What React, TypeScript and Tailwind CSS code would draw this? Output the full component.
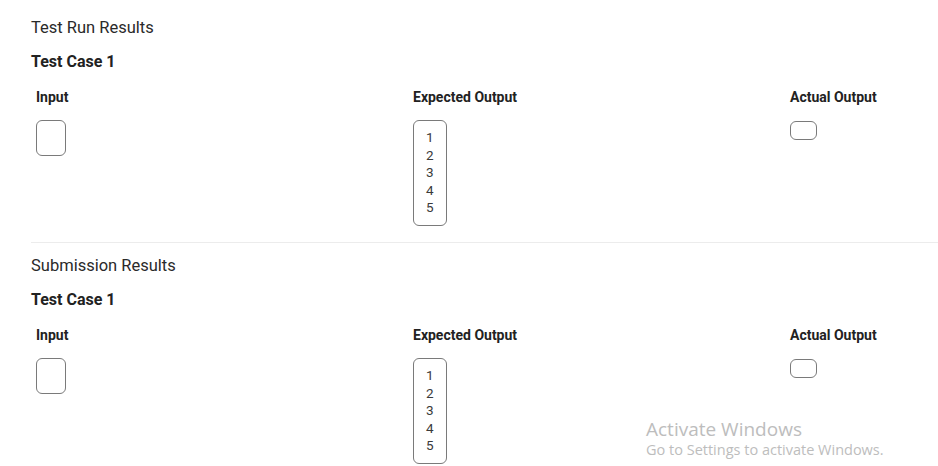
import React from 'react';

const sections = ['Test Run Results', 'Submission Results'];

function Box({ children, className = '' }: { children?: React.ReactNode; className?: string }) {
    return (
        <pre
            className={
                'inline-block border border-[#7a7a7a] rounded-[6px] px-3 py-2 text-[13.5px] leading-[17.6px] text-[#3a3a3a] ' +
                className
            }
            style={{ fontFamily: 'Roboto, "Liberation Sans", sans-serif' }}
        >
            {children}
        </pre>
    );
}

function ResultBlock({ label }: { label: string }) {
    return (
        <div>
            <div className="text-[16.5px] leading-[20px] text-[#2a2a2a]">{label}</div>
            <div className="mt-[14px] text-[16px] leading-[20px] font-bold text-[#222]">Test Case 1</div>
            <div className="ml-[5px] mt-[15px] grid grid-cols-[377px_377px_1fr]">
                <div>
                    <div className="text-[14px] leading-[20px] font-bold text-[#222]">Input</div>
                    <Box className="mt-[13px] w-[30px] h-[36px]" />
                </div>
                <div>
                    <div className="text-[14px] leading-[20px] font-bold text-[#222]">Expected Output</div>
                    <Box className="mt-[13px] w-[34px]">{'1\n2\n3\n4\n5'}</Box>
                </div>
                <div>
                    <div className="text-[14px] leading-[20px] font-bold text-[#222]">Actual Output</div>
                    <Box className="mt-[14px] w-[27px] h-[19px]" />
                </div>
            </div>
        </div>
    );
}

export default function App() {
    return (
        <div
            className="relative w-[938px] h-[466px] overflow-hidden bg-white pl-[31px] pt-[18px]"
            style={{ fontFamily: 'Roboto, "Liberation Sans", sans-serif' }}
        >
            <ResultBlock label={sections[0]} />
            <div className="mt-[16px] h-px bg-[#ececec]" />
            <div className="mt-[13px]">
                <ResultBlock label={sections[1]} />
            </div>

            {/* windows watermark */}
            <div
                className="absolute left-[646px] top-[416px] text-[#bdbdbd] pointer-events-none"
                style={{ fontFamily: '"Open Sans", "Noto Sans", sans-serif' }}
            >
                <div className="text-[19px] leading-[26px]">Activate Windows</div>
                <div className="text-[14.5px] leading-[18px] -mt-[1px]">Go to Settings to activate Windows.</div>
            </div>
        </div>
    );
}
